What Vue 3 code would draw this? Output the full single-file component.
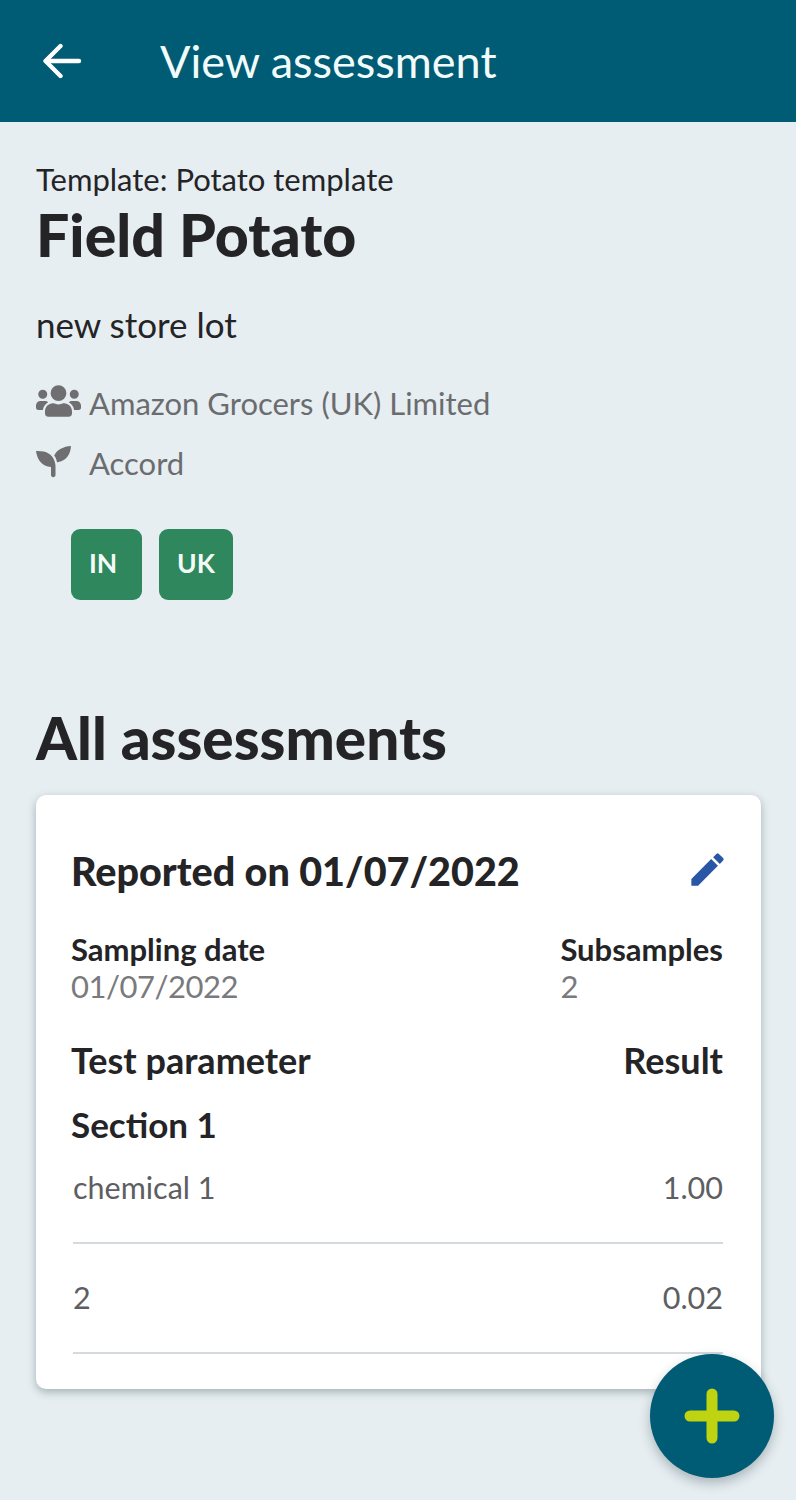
<template>
  <div class="page">
    <header class="app-bar">
      <svg class="back" viewBox="0 0 40 36" width="40" height="36" fill="none" stroke="#fff" stroke-width="4.4" stroke-linecap="round" stroke-linejoin="round">
        <path d="M37 18H4" />
        <path d="M18.5 3 3.5 18 18.5 33" />
      </svg>
      <h1 class="bar-title">View assessment</h1>
    </header>

    <main class="content">
      <div class="template">Template: Potato template</div>
      <h2 class="name">Field Potato</h2>
      <div class="lot">new store lot</div>

      <div class="meta-row">
        <svg class="meta-icon" viewBox="0 0 640 512" width="45" height="36" fill="#6f6f71">
          <path d="M96 224a64 64 0 1 0 0-128 64 64 0 0 0 0 128zm448 0a64 64 0 1 0 0-128 64 64 0 0 0 0 128zm32 32h-64c-17.600 0-33.500 7.100-45.100 18.600 40.300 22.100 68.900 62 75.100 109.400h66c17.700 0 32-14.300 32-32v-32c0-35.300-28.700-64-64-64zm-256 0a112 112 0 1 0 0-224 112 112 0 0 0 0 224zm76.800 32h-8.300c-20.800 10-43.900 16-68.500 16s-47.600-6-68.500-16h-8.300C179.600 288 128 339.600 128 403.200V432c0 26.500 21.500 48 48 48h288c26.500 0 48-21.500 48-48v-28.800c0-63.600-51.600-115.200-115.200-115.200zm-223.700-13.400C161.500 263.100 145.600 256 128 256H64c-35.300 0-64 28.700-64 64v32c0 17.700 14.300 32 32 32h65.900c6.300-47.400 34.900-87.300 75.200-109.400z" />
        </svg>
        <span>Amazon Grocers (UK) Limited</span>
      </div>
      <div class="meta-row crop-row">
        <svg class="meta-icon" viewBox="0 0 45 36" width="45" height="36" fill="#6f6f71">
          <path d="M0 8c9.500-.5 16 2.500 18.500 10 .7 1.800 1 3.500 1 5.500V32c0 1.300-1 2.200-2.250 2.200S15 33.300 15 32v-8C6 23.500 1 16.500 0 8z" />
          <path d="M35 3c-.5 8-4.500 14.500-12.500 16-.6.1-1 .2-1.500.2-.4-2.200-1.300-4.700-2.800-6.700C21 6.500 27.500 3.500 35 3z" />
        </svg>
        <span>Accord</span>
      </div>

      <div class="tags">
        <span v-for="tag in tags" :key="tag" class="tag">{{ tag }}</span>
      </div>

      <h2 class="section-title">All assessments</h2>

      <section class="card">
        <div class="card-head">
          <h3 class="card-title">Reported on 01/07/2022</h3>
          <svg class="edit" viewBox="0 0 24 24" width="43" height="43" fill="#2a56a6">
            <path d="M3 17.250V21h3.750L17.810 9.940l-3.750-3.750L3 17.250zM20.710 7.040a1 1 0 0 0 0-1.410l-2.340-2.340a1 1 0 0 0-1.410 0l-1.830 1.830 3.750 3.750 1.830-1.830z" />
          </svg>
        </div>

        <div class="split info">
          <div>
            <div class="label">Sampling date</div>
            <div class="value">01/07/2022</div>
          </div>
          <div>
            <div class="label">Subsamples</div>
            <div class="value">2</div>
          </div>
        </div>

        <div class="split params">
          <span class="label-lg">Test parameter</span>
          <span class="label-lg">Result</span>
        </div>
        <div class="section-name">Section 1</div>

        <div v-for="row in rows" :key="row.name" class="split result-row">
          <span>{{ row.name }}</span>
          <span>{{ row.value }}</span>
        </div>
      </section>
    </main>

    <button class="fab">
      <svg viewBox="0 0 56 56" width="56" height="56" fill="none" stroke="#bfd311" stroke-width="11" stroke-linecap="round">
        <path d="M28 6v44M6 28h44" />
      </svg>
    </button>
  </div>
</template>

<script setup>
const tags = ['IN', 'UK']

const rows = [
  { name: 'chemical 1', value: '1.00' },
  { name: '2', value: '0.02' }
]
</script>

<style>
body {
  margin: 0;
  background: #e6eef1;
}
</style>

<style scoped>
.page {
  position: relative;
  width: 796px;
  height: 1500px;
  overflow: hidden;
  background: #e6eef1;
  color: #242427;
  font-family: Lato, "Liberation Sans", sans-serif;
}

.app-bar {
  display: flex;
  align-items: center;
  height: 122px;
  padding-left: 42px;
  box-sizing: border-box;
  background: #005b74;
}

.back {
  margin-right: 78px;
}

.bar-title {
  margin: 0;
  color: #f2fbfb;
  font-size: 45px;
  font-weight: 400;
}

.content {
  padding: 39px 35px 0 36px;
}

.template {
  font-size: 31px;
  line-height: 36px;
}

.name {
  margin: 0;
  font-size: 59px;
  line-height: 76px;
  font-weight: 900;
}

.lot {
  margin-top: 30px;
  font-size: 35px;
  line-height: 42px;
}

.meta-row {
  display: flex;
  align-items: center;
  gap: 8px;
  margin-top: 40px;
  color: #6b6c6f;
  font-size: 31px;
  line-height: 36px;
}

.meta-icon {
  margin: -2px 0 2px;
}

.crop-row {
  margin-top: 24px;
}

.tags {
  display: flex;
  gap: 17px;
  margin: 48px 0 0 35px;
}

.tag {
  display: flex;
  align-items: center;
  min-width: 71px;
  height: 71px;
  padding: 0 18px 3px;
  box-sizing: border-box;
  border-radius: 9px;
  background: #2e875d;
  color: #f4faf6;
  font-size: 26.500px;
  font-weight: 700;
}

.section-title {
  margin: 103px 0 0;
  font-size: 58.5px;
  line-height: 68px;
  font-weight: 900;
}

.card {
  height: 594px;
  margin-top: 24px;
  padding: 54px 38px 0 35px;
  box-sizing: border-box;
  border-radius: 10px;
  background: #fff;
  box-shadow: 0 3px 8px rgba(40, 60, 70, 0.35);
}

.card-head {
  display: flex;
  align-items: center;
  justify-content: space-between;
  height: 42px;
}

.edit {
  margin: -2px -6px 0 0;
}

.card-title {
  margin: 0;
  font-size: 39.5px;
  font-weight: 900;
}

.split {
  display: flex;
  justify-content: space-between;
}

.info {
  margin-top: 40px;
}

.label {
  font-size: 31px;
  line-height: 36px;
  font-weight: 700;
}

.value {
  color: #7a7a7d;
  font-size: 31px;
  line-height: 38px;
  letter-spacing: -0.5px;
}

.params {
  margin-top: 35px;
}

.label-lg {
  font-size: 36px;
  line-height: 40px;
  font-weight: 700;
}

.section-name {
  margin-top: 24px;
  font-size: 35px;
  line-height: 40px;
  font-weight: 700;
}

.result-row {
  margin-left: 2px;
  padding: 35px 0 37px;
  border-bottom: 2px solid #d4dadd;
  color: #5d5e61;
  font-size: 30.5px;
  line-height: 36px;
}

.section-name + .result-row {
  padding-top: 25px;
}

.fab {
  position: absolute;
  left: 650px;
  top: 1354px;
  display: flex;
  align-items: center;
  justify-content: center;
  width: 124px;
  height: 124px;
  padding: 0;
  border: none;
  border-radius: 50%;
  background: #005b74;
  box-shadow: 0 5px 12px rgba(30, 50, 60, 0.3);
}
</style>
